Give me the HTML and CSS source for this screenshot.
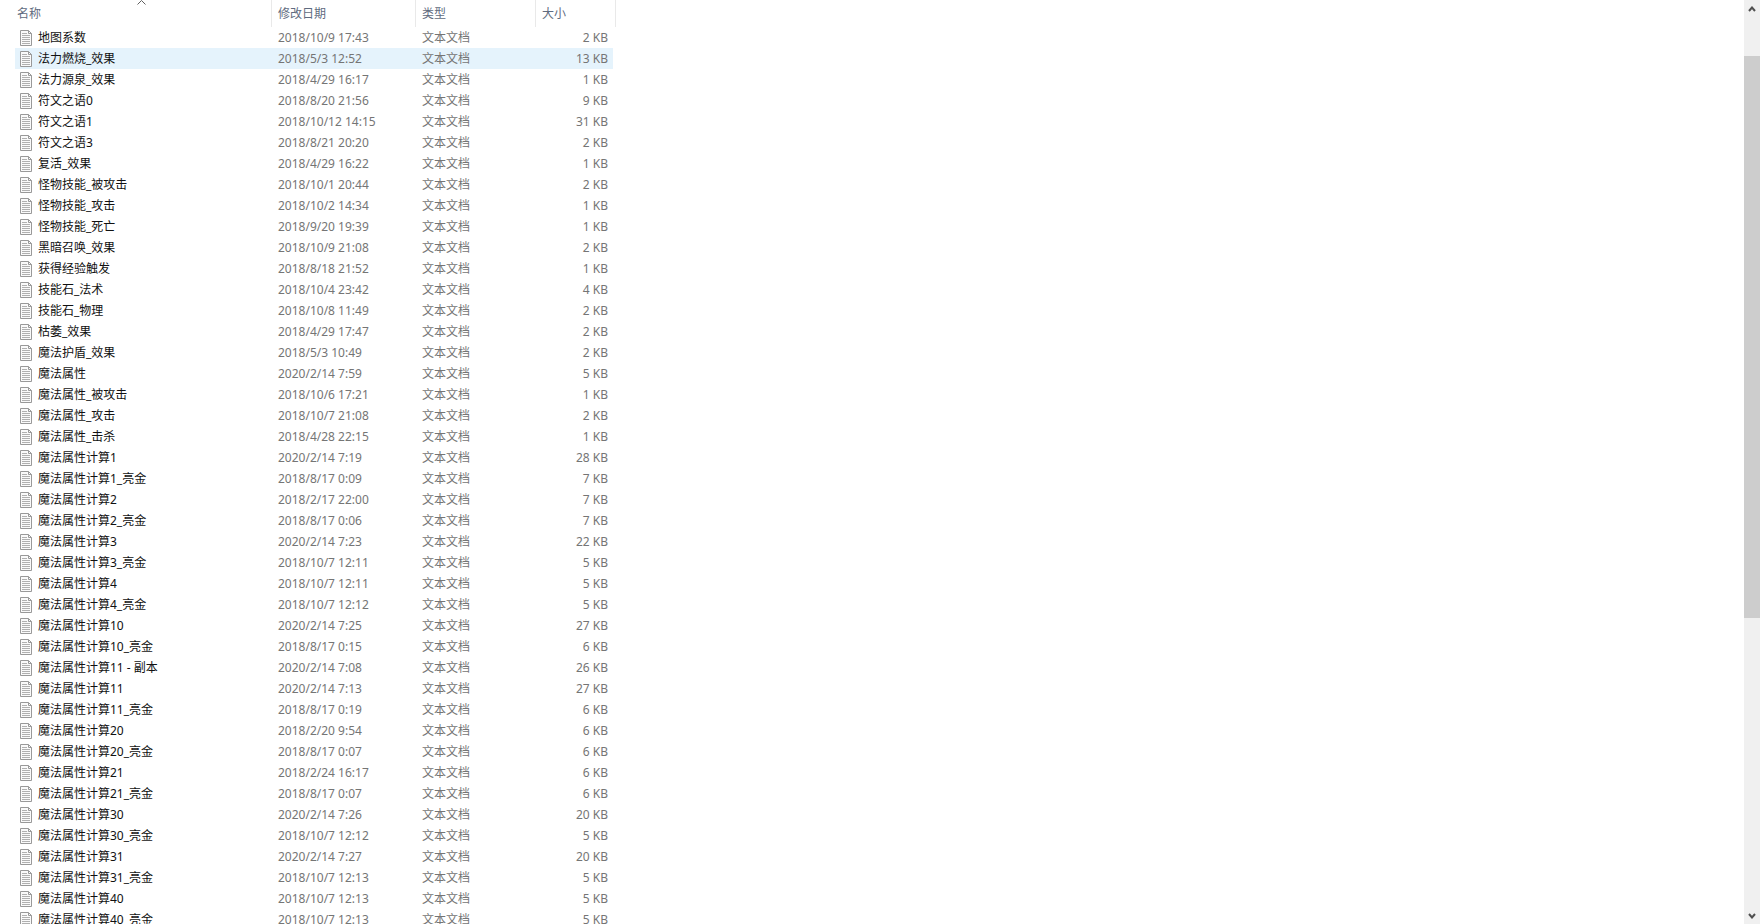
FILE: index.html
```html
<!DOCTYPE html>
<html lang="zh-CN">
<head>
    <meta charset="UTF-8">
    <meta name="viewport" content="width=device-width, initial-scale=1.0">
    <title>文件列表</title>
    <link rel="stylesheet" href="styles.css">
</head>
<body>
    <svg class="sprite" aria-hidden="true">
        <symbol id="icon-txt" viewBox="0 0 12 16">
            <path d="M.5 .5h8l3 3v12H.5z" fill="#fafafa" stroke="#999"/>
            <path d="M8.5 .5v3h3" fill="none" stroke="#999"/>
            <path d="M2 3.5h5M2 5.5h8M2 7.5h8M2 9.5h8M2 11.5h8M2 13.5h8" stroke="#b0b0b0"/>
        </symbol>
    </svg>
    <div class="window">
        <main class="list">
            <table class="files">
                <colgroup>
                    <col class="col-name">
                    <col class="col-date">
                    <col class="col-type">
                    <col class="col-size">
                </colgroup>
                <thead>
                    <tr>
                        <th aria-sort="ascending">
                            <button type="button">名称</button>
                            <svg class="sort-mark" viewBox="0 0 9 5" aria-hidden="true"><path d="M.5 4.5l4-4 4 4" fill="none" stroke="#606060"/></svg>
                        </th>
                        <th><button type="button">修改日期</button></th>
                        <th><button type="button">类型</button></th>
                        <th><button type="button">大小</button></th>
                    </tr>
                </thead>
                <tbody id="file-rows"></tbody>
            </table>
        </main>
        <div class="scrollbar">
            <button type="button" class="arrow" aria-label="向上滚动">
                <svg viewBox="0 0 8 6"><path d="M1 5l3-3.5L7 5" fill="none" stroke="#505050" stroke-width="2"/></svg>
            </button>
            <div class="track">
                <div class="thumb"></div>
            </div>
            <button type="button" class="arrow" aria-label="向下滚动">
                <svg viewBox="0 0 8 6"><path d="M1 1l3 3.5L7 1" fill="none" stroke="#505050" stroke-width="2"/></svg>
            </button>
        </div>
    </div>
    <script>
        // 文件名, 修改日期, 大小(KB)
        const files = [
            ['地图系数', '2018/10/9 17:43', 2],
            ['法力燃烧_效果', '2018/5/3 12:52', 13],
            ['法力源泉_效果', '2018/4/29 16:17', 1],
            ['符文之语0', '2018/8/20 21:56', 9],
            ['符文之语1', '2018/10/12 14:15', 31],
            ['符文之语3', '2018/8/21 20:20', 2],
            ['复活_效果', '2018/4/29 16:22', 1],
            ['怪物技能_被攻击', '2018/10/1 20:44', 2],
            ['怪物技能_攻击', '2018/10/2 14:34', 1],
            ['怪物技能_死亡', '2018/9/20 19:39', 1],
            ['黑暗召唤_效果', '2018/10/9 21:08', 2],
            ['获得经验触发', '2018/8/18 21:52', 1],
            ['技能石_法术', '2018/10/4 23:42', 4],
            ['技能石_物理', '2018/10/8 11:49', 2],
            ['枯萎_效果', '2018/4/29 17:47', 2],
            ['魔法护盾_效果', '2018/5/3 10:49', 2],
            ['魔法属性', '2020/2/14 7:59', 5],
            ['魔法属性_被攻击', '2018/10/6 17:21', 1],
            ['魔法属性_攻击', '2018/10/7 21:08', 2],
            ['魔法属性_击杀', '2018/4/28 22:15', 1],
            ['魔法属性计算1', '2020/2/14 7:19', 28],
            ['魔法属性计算1_亮金', '2018/8/17 0:09', 7],
            ['魔法属性计算2', '2018/2/17 22:00', 7],
            ['魔法属性计算2_亮金', '2018/8/17 0:06', 7],
            ['魔法属性计算3', '2020/2/14 7:23', 22],
            ['魔法属性计算3_亮金', '2018/10/7 12:11', 5],
            ['魔法属性计算4', '2018/10/7 12:11', 5],
            ['魔法属性计算4_亮金', '2018/10/7 12:12', 5],
            ['魔法属性计算10', '2020/2/14 7:25', 27],
            ['魔法属性计算10_亮金', '2018/8/17 0:15', 6],
            ['魔法属性计算11 - 副本', '2020/2/14 7:08', 26],
            ['魔法属性计算11', '2020/2/14 7:13', 27],
            ['魔法属性计算11_亮金', '2018/8/17 0:19', 6],
            ['魔法属性计算20', '2018/2/20 9:54', 6],
            ['魔法属性计算20_亮金', '2018/8/17 0:07', 6],
            ['魔法属性计算21', '2018/2/24 16:17', 6],
            ['魔法属性计算21_亮金', '2018/8/17 0:07', 6],
            ['魔法属性计算30', '2020/2/14 7:26', 20],
            ['魔法属性计算30_亮金', '2018/10/7 12:12', 5],
            ['魔法属性计算31', '2020/2/14 7:27', 20],
            ['魔法属性计算31_亮金', '2018/10/7 12:13', 5],
            ['魔法属性计算40', '2018/10/7 12:13', 5],
            ['魔法属性计算40_亮金', '2018/10/7 12:13', 5]
        ];
        const activeName = '法力燃烧_效果';

        document.getElementById('file-rows').innerHTML = files.map(([name, date, size]) => `
            <tr${name === activeName ? ' class="active"' : ''}>
                <td class="name"><div class="file"><svg class="icon" aria-hidden="true"><use href="#icon-txt"/></svg>${name}</div></td>
                <td>${date}</td>
                <td>文本文档</td>
                <td class="size">${size} KB</td>
            </tr>`).join('');
    </script>
</body>
</html>
```

FILE: styles.css
```css
* {
    box-sizing: border-box;
}
body {
    margin: 0;
    background-color: #fff;
    color: #757575;
    font-family: "Noto Sans", "Noto Sans CJK SC", sans-serif;
    font-size: 12px;
    line-height: 20px;
}
button {
    padding: 0;
    border: 0;
    background: none;
    color: inherit;
    font: inherit;
}
.sprite {
    display: none;
}
.window {
    display: flex;
    height: 100vh;
    overflow: hidden;
}
.list {
    flex: 1;
    padding-left: 15px;
    overflow: hidden;
}

/* 文件表格 */
.files {
    table-layout: fixed;
    width: 601px;
    border-collapse: separate;
    border-spacing: 0;
}
.col-name {
    width: 257px;
}
.col-date {
    width: 144px;
}
.col-type {
    width: 120px;
}
.col-size {
    width: 80px;
}
.files th {
    position: relative;
    height: 27px;
    padding: 0 6px;
    border-right: 1px solid #e9e9e9;
    color: #5f6b80;
    font-weight: normal;
    text-align: left;
}
.files th:first-child {
    padding-left: 2px;
}
.sort-mark {
    position: absolute;
    top: 0;
    left: 122px;
    width: 9px;
    height: 5px;
}
.files td {
    height: 21px;
    padding: 0 6px;
    white-space: nowrap;
}
.files .name {
    padding-left: 5px;
    color: #111;
}
.files .size {
    padding-right: 5px;
    border-right: 3px solid transparent;
    background-clip: padding-box;
    text-align: right;
}
.active td,
.files tbody tr:hover td {
    background-color: #e5f3fc;
}
.file {
    display: flex;
    align-items: center;
    gap: 6px;
}
.icon {
    flex-shrink: 0;
    width: 12px;
    height: 16px;
}

/* 滚动条 */
.scrollbar {
    display: flex;
    flex-direction: column;
    width: 16px;
    background-color: #f0f0f0;
}
.arrow {
    display: flex;
    align-items: center;
    justify-content: center;
    height: 17px;
}
.arrow svg {
    width: 8px;
    height: 6px;
}
.track {
    flex: 1;
    padding-top: 39px;
}
.thumb {
    height: 66%;
    background-color: #cdcdcd;
}
```
